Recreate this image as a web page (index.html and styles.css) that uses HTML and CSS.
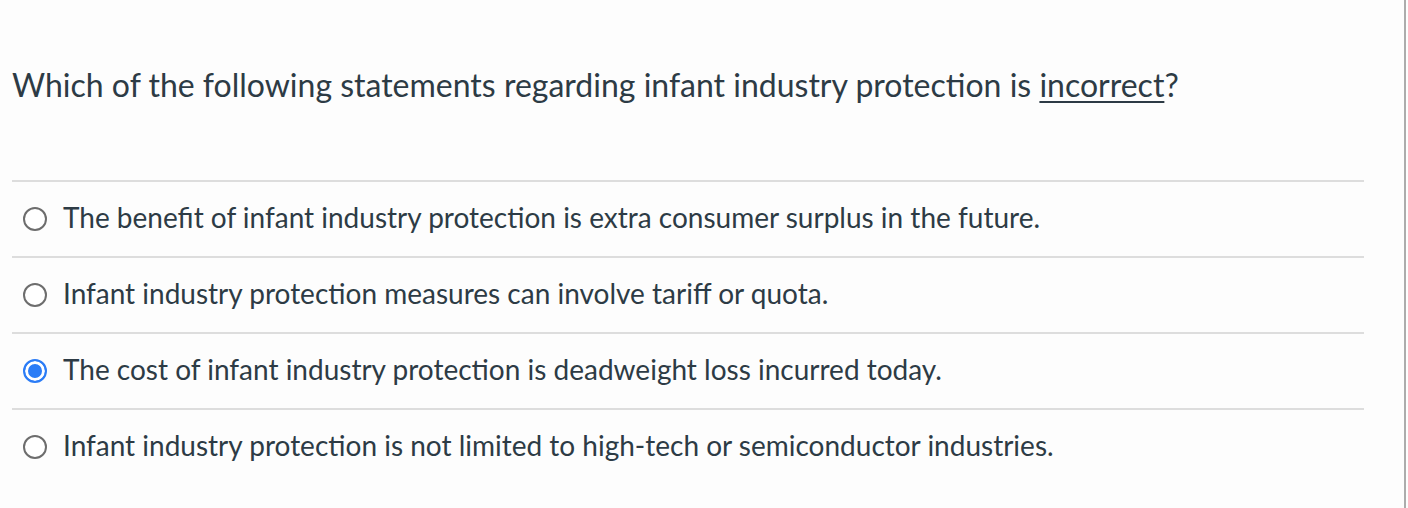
FILE: index.html
```html
<!DOCTYPE html>
<html>
<head>
<meta charset="utf-8">
<link rel="stylesheet" href="styles.css">
</head>
<body>
<div class="page">
  <div class="question">Which of the following statements regarding infant industry protection is <u>incorrect</u>?</div>
  <div class="answers">
    <div class="answer"><span class="radio"></span><span class="label">The benefit of infant industry protection is extra consumer surplus in the future.</span></div>
    <div class="answer"><span class="radio"></span><span class="label">Infant industry protection measures can involve tariff or quota.</span></div>
    <div class="answer"><span class="radio checked"></span><span class="label">The cost of infant industry protection is deadweight loss incurred today.</span></div>
    <div class="answer"><span class="radio"></span><span class="label">Infant industry protection is not limited to high-tech or semiconductor industries.</span></div>
  </div>
</div>
</body>
</html>
```
FILE: styles.css
```css
html, body {
  margin: 0;
  padding: 0;
  background: #fdfdfd;
}
.page {
  width: 1404px;
  height: 508px;
  border-right: 2px solid #acacac;
  font-family: Lato, "Open Sans", sans-serif;
  color: #2d3b45;
  box-sizing: content-box;
}
.question {
  padding: 65px 0 0 12px;
  height: 180px;
  box-sizing: border-box;
  font-size: 32px;
  line-height: 40px;
}
.question u {
  text-decoration-thickness: 2px;
  text-underline-offset: 4px;
}
.answers {
  margin: 0 40px 0 12px;
}
.answer {
  display: flex;
  align-items: center;
  height: 76px;
  border-top: 2px solid #dddddd;
  box-sizing: border-box;
  padding-left: 11px;
}
.radio {
  width: 24px;
  height: 24px;
  border: 2px solid #6d6d6d;
  border-radius: 50%;
  box-sizing: border-box;
  background: #fff;
  flex: none;
  margin-right: 16px;
}
.radio.checked {
  border: 2px solid #2b7cf6;
  background: #2b7cf6;
  box-shadow: inset 0 0 0 3px #fff;
}
.label {
  font-size: 28px;
  line-height: 34px;
  margin-bottom: 5px;
}
```
